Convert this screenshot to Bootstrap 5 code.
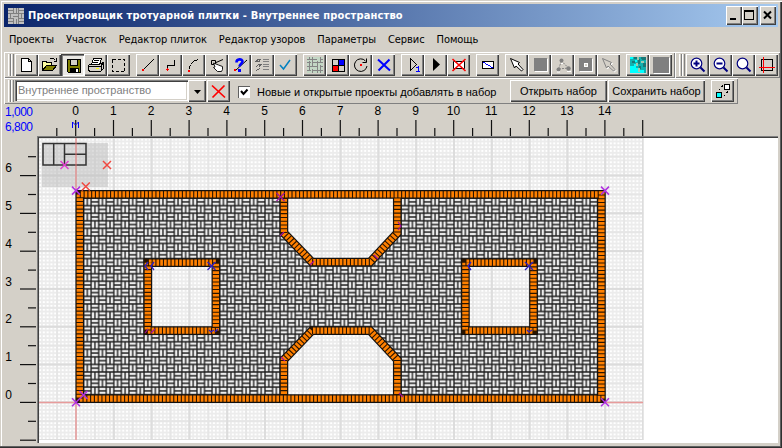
<!DOCTYPE html>
<html lang="ru">
<head>
<meta charset="utf-8">
<title>Проектировщик тротуарной плитки</title>
<link href="https://cdn.jsdelivr.net/npm/bootstrap@5.3.0/dist/css/bootstrap.min.css" rel="stylesheet">
<style>
html,body{height:448px;overflow:hidden}
body{background:#d4d0c8;color:#000;font-family:"Liberation Sans",Arial,sans-serif;font-size:11px;line-height:1}
svg{display:block;flex:none}
.app-window{width:782px;height:448px;background:#d4d0c8;padding:4px 4px 0;box-shadow:inset 1px 1px #d4d0c8,inset 2px 2px #fff,inset -1px -1px #303030,inset -2px -2px #606060}
.title-strip{height:23px;background:linear-gradient(90deg,#0a246a,#a6caf0);color:#fff;padding:0 2px 0 4px}
.title-text{font:bold 11px/24px "DejaVu Sans Condensed","DejaVu Sans",sans-serif;letter-spacing:.155px;white-space:nowrap;margin-left:4px}
.bev{background:#d4d0c8;border:0;padding:0;color:#000;box-shadow:inset 1px 1px #fff,inset -1px -1px #404040,inset -2px -2px #808080;flex:none}
.bev.down{background:#eae8e3;box-shadow:inset 1px 1px #404040,inset 2px 2px #808080,inset -1px -1px #fff}
.cap{width:16px;height:19px}
.menu-strip{height:25px;padding-left:5px;gap:12px;font:11px/26px "DejaVu Sans Condensed","DejaVu Sans",sans-serif;letter-spacing:-.07px}
.menu-strip a{color:#000;text-decoration:none;white-space:nowrap}
.toolstrip{height:26px;padding:2px 3px 0 4px;box-shadow:inset 1px 1px #fff,inset -1px -1px #808080}
.tool{width:23px;height:22px}
.grip{width:6px;height:22px;margin-right:1px;background:linear-gradient(90deg,#fff 0 1px,#d4d0c8 1px 2px,#808080 2px 3px,#fff 3px 4px,#d4d0c8 4px 5px,#808080 5px 6px)}
.gap-l{margin-left:6px}
.setstrip{width:734px;height:26px;padding:2px 3px 0 4px;box-shadow:inset 1px 1px #fff,inset -1px -1px #808080}
.combo{width:173px;height:21px;background:#fff;color:#808080;box-shadow:inset 1px 1px #808080,inset 2px 2px #404040,inset -1px -1px #fff,inset -2px -2px #d4d0c8;line-height:20px;padding-left:3px;white-space:nowrap}
.tickbox{width:12px;height:12px;background:#fff;box-shadow:inset 1px 1px #606060;margin-left:8px}
.set-label{margin-left:7px;width:253px;white-space:nowrap;line-height:24px}
.textbtn{width:97px;height:22px;line-height:23px;text-align:center;white-space:nowrap}
.plan{margin:0 -4px 0 -4px}
.plan text{font-family:"Liberation Sans",Arial,sans-serif;font-size:12px}
</style>
<script src="https://cdn.jsdelivr.net/npm/bootstrap@5.3.0/dist/js/bootstrap.bundle.min.js"></script>
</head>
<body>
<div class="app-window d-flex flex-column">
  <header class="title-strip d-flex align-items-center">
    <svg width="16" height="16" shape-rendering="crispEdges"><path fill="#c0c0c0" d="M0 0h16v16H0z"/><path stroke="#808080" d="M0 5.5h16M0 10.5h5M10 10.5h6M5.500 0v5M10.500 0v16M5.500 10v6M2.500 5v5M13.500 5v5M5 8.500h5M0 2.500h5M11 2.500h5M8.500 0v5M0 13.500h5M11 13.500h5M8.500 11v5"/></svg>
    <span class="title-text">Проектировщик тротуарной плитки - Внутреннее пространство</span>
    <div class="ms-auto d-flex">
      <button class="bev cap" aria-label="Свернуть"><svg width="16" height="19"><path d="M4 12h6v2H4z"/></svg></button>
      <button class="bev cap" aria-label="Развернуть"><svg width="16" height="19" shape-rendering="crispEdges"><path fill="none" stroke="#000" d="M2.500 4v9.500h9V4"/><path d="M2 4h10v2H2z"/></svg></button>
      <button class="bev cap" style="margin-left:2px" aria-label="Закрыть"><svg width="16" height="19"><path stroke="#000" stroke-width="2" d="M4 5.500l7 7M11 5.500l-7 7"/></svg></button>
    </div>
  </header>
  <nav class="menu-strip d-flex"><a>Проекты</a><a>Участок</a><a>Редактор плиток</a><a>Редактор узоров</a><a>Параметры</a><a>Сервис</a><a>Помощь</a></nav>

  <div class="d-flex">
  <div class="toolstrip d-flex">
    <i class="grip"></i>
    <button class="bev tool"><svg width="23" height="22" shape-rendering="crispEdges"><path fill="#fff" stroke="#000" d="M6.500 4.500h7l3 3v10h-10zM13.500 4.500v3h3"/></svg></button>
    <button class="bev tool"><svg width="23" height="22" shape-rendering="crispEdges"><path fill="#ffffa0" stroke="#000" d="M4.500 16.500v-9h4v1h5v3"/><path fill="#808000" stroke="#000" d="M4.500 16.500l4-5h10l-4 5z"/><path fill="none" stroke="#000" d="M11.500 5.500l1-1h3l2 2M18.500 4v3h-3"/></svg></button>
    <button class="bev tool down"><svg width="23" height="22" shape-rendering="crispEdges"><path fill="#808000" stroke="#000" d="M6.500 5.500h13v13h-12l-1-1z"/><path fill="#d4d0c8" stroke="#000" d="M9.500 5.500h7v6h-7z"/><path d="M9 14h9v5H9z"/><path fill="#fff" d="M15 15h2v3h-2z"/></svg></button>
    <button class="bev tool"><svg width="23" height="22" shape-rendering="crispEdges"><path fill="#d4d0c8" stroke="#000" d="M4.500 11.500l3-2h10l2-1v6l-3 3h-11l-1-2z"/><path fill="#fff" stroke="#000" d="M7.500 10.500l2-6h8l-2 6z"/><path stroke="#000" d="M10 6.500h5M9 8.500h5M5 12.500h12M17 12v5M17 12l2-3"/><path fill="#ff0" d="M12 14h3v1h-3z"/></svg></button>
    <button class="bev tool"><svg width="23" height="22" shape-rendering="crispEdges"><rect x="5.500" y="5.500" width="12" height="12" fill="none" stroke="#000" stroke-dasharray="3 2"/></svg></button>
    <button class="bev tool gap-l"><svg width="23" height="22" shape-rendering="crispEdges"><path stroke="#000" d="M7.500 15.500l10-10"/><path fill="red" d="M6 15h2v2H6z"/></svg></button>
    <button class="bev tool"><svg width="23" height="22" shape-rendering="crispEdges"><path fill="none" stroke="#000" d="M8.500 15v-3.500h7V6"/><path stroke="red" d="M7 15.500h3M8.500 14v3"/></svg></button>
    <button class="bev tool"><svg width="23" height="22" shape-rendering="crispEdges"><path fill="none" stroke="#000" d="M7.500 15c0-5 4-9 10-9.500" stroke-dasharray="4 1"/><path fill="red" d="M6 16h2v2H6z"/></svg></button>
    <button class="bev tool"><svg width="23" height="22"><path fill="none" stroke="#000" d="M6.500 6.500h4v4h-4zM11 8.500l7-3"/><path fill="#fff" stroke="#000" stroke-width=".9" d="M8.500 9l1.500 4-1.500.5 4 4h4l1-2v-3l-4-1.500z"/></svg></button>
    <button class="bev tool"><svg width="23" height="22"><path stroke="#000" d="M8 16L19 6"/><path fill="none" stroke="#00f" stroke-width="2.600" d="M8.500 8.500c0-4 6-4 6-1 0 2-3 2.500-3 5"/><path fill="#00f" d="M10 15h3v3h-3z"/><path fill="red" d="M6 15h2v2H6z"/></svg></button>
    <button class="bev tool"><svg width="23" height="22" shape-rendering="crispEdges"><path fill="none" stroke="#606060" d="M5 7.500l2-2h2l-1 2zM5 12.500l3-2h2l-2 2M5 16.500l4-2"/><path stroke="#808080" d="M12 5.500h6M12 7.500h6M12 10.500h6M12 12.500h6M12 15.500h6"/></svg></button>
    <button class="bev tool"><svg width="23" height="22"><path fill="none" stroke="#0080c0" stroke-width="1.500" d="M6 11l3.500 4L16 6"/></svg></button>
    <button class="bev tool gap-l"><svg width="23" height="22" shape-rendering="crispEdges"><path fill="#c3d7c5" d="M4 3h16v16H4z"/><path stroke="#848484" d="M4 5.500h10M17 5.500h3M4 8.500h4M10 8.500h10M4 12.500h10M17 12.500h3M4 16.500h4M10 16.500h10M6.500 3v2M6.500 7v9M9.500 3v10M9.500 15v4M14.500 7v12M17.500 3v6M17.500 11v8"/></svg></button>
    <button class="bev tool"><svg width="23" height="22" shape-rendering="crispEdges"><path fill="#d4d0c8" stroke="#000" d="M6.500 5.500h12v12h-12z"/><path fill="#00f" d="M13 6h5v6h-5z"/><path fill="red" d="M7 12h5v5H7z"/><path stroke="#000" d="M12.500 5v13M6 11.500h13"/></svg></button>
    <button class="bev tool"><svg width="23" height="22"><path fill="none" stroke="#000" d="M16.500 7A6.300 6.300 0 1 0 18 12M17.500 4.500v4h-4"/><path fill="red" d="M11 10h2v2h-2z"/></svg></button>
    <button class="bev tool"><svg width="23" height="22"><path stroke="#00f" stroke-width="2" d="M6 5.500l12 11M17.500 5.500l-11 11"/></svg></button>
    <button class="bev tool gap-l"><svg width="23" height="22" shape-rendering="crispEdges"><path fill="none" stroke="#000" d="M9.500 4.500v12l6-6z"/><path fill="none" stroke="#00f" d="M15 13.500h2.500M17.500 12v5M15 17.500h4"/></svg></button>
    <button class="bev tool"><svg width="23" height="22"><path d="M9 4v13l7-6.500z"/></svg></button>
    <button class="bev tool"><svg width="23" height="22"><path fill="#fff" stroke="#000" d="M6.500 7.500h11v7h-11z"/><path stroke="red" stroke-width="1.600" d="M5.500 5l13 12M18.500 5l-13 12"/></svg></button>
    <button class="bev tool gap-l"><svg width="23" height="22" shape-rendering="crispEdges"><path fill="#fff" stroke="#000" d="M6.500 7.500h11v7h-11z"/><path stroke="#00f" d="M7 8l10 6"/></svg></button>
    <button class="bev tool gap-l"><svg width="23" height="22"><path fill="#fff" stroke="#000" d="M5.500 4.500l9 4-1.500 1.500 5 5.500-1.500 1.500-5.500-5-1.500 2z"/></svg></button>
    <button class="bev tool"><svg width="23" height="22" shape-rendering="crispEdges"><path fill="#fff" d="M7 5h13v13H7z"/><path fill="#808080" d="M6 4h13v13H6z"/></svg></button>
    <button class="bev tool"><svg width="23" height="22"><g fill="#808080"><circle cx="10.500" cy="6.500" r="2"/><circle cx="7.500" cy="15.500" r="2"/><circle cx="17.500" cy="14.500" r="2.200"/></g><path stroke="#808080" stroke-dasharray="2 1" fill="none" d="M10.500 7l-3 8 10-1z"/><path stroke="#fff" fill="none" d="M6 18h3M16 17.500h4M10 9.500h2"/></svg></button>
    <button class="bev tool"><svg width="23" height="22" shape-rendering="crispEdges"><path fill="#fff" d="M6 5h13v13H6z"/><path fill="#808080" d="M5 4h13v13H5z"/><path fill="#fff" d="M10 9h4v4h-4z"/><path fill="#d4d0c8" d="M11 10h2v2h-2z"/></svg></button>
    <button class="bev tool"><svg width="23" height="22"><path fill="none" stroke="#fff" d="M6.500 5.500l9 4-1.500 1.500 5 5.500-1.500 1.500-5.500-5-1.500 2z"/><path fill="#d4d0c8" stroke="#808080" d="M5.500 4.500l9 4-1.500 1.500 5 5.500-1.500 1.500-5.500-5-1.500 2z"/></svg></button>
    <button class="bev tool gap-l"><svg width="23" height="22" shape-rendering="crispEdges"><path fill="#10b0b0" d="M4 3h16v16H4z"/><path fill="#0ff" d="M4 12h4v-2h2v4h4v2h4v3H4zM4 3h3v2H4zM9 6h2v2H9z"/><path fill="#187878" d="M8 3h3v2H8zM12 5h2v5h-2zM15 3h5v3h-4zM13 12h2v3h-2zM6 7h3v2H6zM17 9h3v4h-3z"/><path fill="#a0c8b0" d="M11 3h2v3h-2zM15 7h3v2h-3zM10 9h2v3h-2zM12 14h2v4h-2z"/></svg></button>
    <button class="bev tool"><svg width="23" height="22" shape-rendering="crispEdges"><path fill="#fff" d="M5 4h16v16H5z"/><path fill="#808080" d="M4 3h16v16H4z"/></svg></button>
  </div>
  <div class="toolstrip d-flex flex-grow-1" style="padding-right:2px">
    <i class="grip"></i>
    <button class="bev tool"><svg width="23" height="22"><g stroke="#000080" fill="#fff"><circle cx="10.500" cy="9.500" r="5.300" stroke-width="1.200"/><path stroke-width="2" d="M14.500 13.500l4 4M7.500 9.500h6M10.500 6.500v6"/></g></svg></button>
    <button class="bev tool"><svg width="23" height="22"><g stroke="#000080" fill="#fff"><circle cx="10.500" cy="9.500" r="5.300" stroke-width="1.200"/><path stroke-width="2" d="M14.500 13.500l4 4M7.500 9.500h6"/></g></svg></button>
    <button class="bev tool"><svg width="23" height="22"><g stroke="#000080" fill="#fff"><circle cx="10.500" cy="9.500" r="5.300" stroke-width="1.200"/><path stroke-width="2" d="M14.500 13.500l4 4"/></g></svg></button>
    <button class="bev tool"><svg width="23" height="22" shape-rendering="crispEdges"><path fill="none" stroke="#000" d="M6.500 5.500h11v11h-11z"/><path stroke="red" d="M8.500 3v16M4 13.500h16"/></svg></button>
  </div>
  </div>

  <div class="setstrip d-flex">
    <i class="grip"></i>
    <div class="combo">Внутреннее пространство</div>
    <button class="bev" style="width:18px;height:22px"><svg width="18" height="22"><path d="M6 10h7l-3.500 4z"/></svg></button>
    <button class="bev" style="width:23px;height:22px;margin-left:1px"><svg width="23" height="22"><path stroke="red" stroke-width="1.700" d="M5 5.500l13 12M17.500 5.500l-12 12"/></svg></button>
    <span class="tickbox align-self-center"><svg width="12" height="12"><path fill="none" stroke="#000" stroke-width="2" d="M3 5l2.500 3L9.500 3.500"/></svg></span>
    <label class="set-label">Новые и открытые проекты добавлять в набор</label>
    <button class="bev textbtn">Открыть набор</button>
    <button class="bev textbtn" style="margin-left:1px">Сохранить набор</button>
    <button class="bev tool gap-l"><svg width="23" height="22" shape-rendering="crispEdges"><path fill="#fff" stroke="#000" d="M13.500 4.500h5v5h-5z"/><path fill="#0ff" stroke="#000" d="M5.500 12.500h5v5h-5z"/><path fill="none" stroke="#000" stroke-dasharray="2 2" d="M12 5.500l-5 6M17 11.500l-5 6"/></svg></button>
  </div>

  <svg class="plan" width="782" height="344" viewBox="0 104 782 344">
    <defs>
      <pattern id="fine" x="76" y="402.300" width="3.780" height="3.780" patternUnits="userSpaceOnUse"><path stroke="#ececec" stroke-width="1.700" d="M0 0H3.780M0 0V3.780M3.780 0V3.780M0 3.780H3.780"/></pattern>
      <pattern id="half" x="76" y="402.300" width="18.900" height="18.900" patternUnits="userSpaceOnUse"><path stroke="#e6e6e6" stroke-width="1.800" d="M0 0H18.900M0 0V18.900M18.900 0V18.900M0 18.900H18.900"/></pattern>
      <pattern id="whole" x="76" y="402.300" width="37.800" height="37.800" patternUnits="userSpaceOnUse"><path stroke="#dcdcdc" stroke-width="1.800" d="M0 0H37.800M0 0V37.800M37.800 0V37.800M0 37.800H37.800"/></pattern>
      <pattern id="weave" x="83.560" y="198.100" width="15.120" height="15.120" patternUnits="userSpaceOnUse"><path fill="#ededed" d="M0 0h15.120v15.120H0z"/><path fill="none" stroke="#1c1c1c" stroke-width="1.300" d="M0 0H15.120M0 7.560H15.120M0 15.120H15.120M0 0V15.120M7.560 0V15.120M15.120 0V15.120M3.780 0V7.560M7.560 3.780H15.120M0 11.340H7.560M11.340 7.560V15.120"/></pattern>
      <path id="kerb" d="M79.780 194.400H601.400V398.600H79.780ZM147.800 262.600H215.900V330.600H147.800ZM465.400 262.600H533.500V330.600H465.400ZM283.900 198V233L312 262.200H370L397.300 233V198M283.900 395V359.800L312 330.600H370L397.300 359.800V395"/>
      <path id="cross" d="M-4-4L4 4M4-4L-4 4"/>
    </defs>
    <path fill="#fff" d="M38 138H778V443H38z"/>
    <path fill="url(#fine)" d="M39 138H643.500V440H39z"/>
    <path fill="url(#half)" d="M39 138H643.500V440H39z"/>
    <path fill="url(#whole)" d="M39 138H643.500V440H39z"/>
    <path stroke="#808080" d="M37 136.500H778M37.500 136V443"/><path stroke="#404040" d="M38 137.500H778M38.500 138V443"/>
    <path fill="#bbb" fill-opacity=".5" d="M42 143H108V187H42z"/>
    <path fill="none" stroke="#333" stroke-width="1.500" d="M43 143.500H86V165H43zM53.700 143.500V165M64.500 143.500V165M64.500 154.300H86"/>
    <path stroke="#f07070" stroke-opacity=".6" stroke-width="1.500" d="M76 138V190M76 402V440M39 402.400H76M605 402.400H643"/>
    <path fill="url(#weave)" fill-rule="evenodd" d="M80 194H601V399H80ZM147.800 262.600V330.600H215.900V262.600ZM465.400 262.600V330.600H533.500V262.600ZM283.900 194V233L312 262.200H370L397.300 233V194ZM283.900 399V359.800L312 330.600H370L397.300 359.800V399Z"/>
    <use href="#kerb" fill="none" stroke="#111" stroke-width="8.700"/>
    <use href="#kerb" fill="none" stroke="#ff8000" stroke-width="6.300"/>
    <use href="#kerb" fill="none" stroke="#2a1400" stroke-width="7.500" stroke-dasharray="1.100 2.680"/>
    <g fill="none" stroke="#b030e0" stroke-width="1.500">
      <use href="#cross" x="76" y="190.600"/><use href="#cross" x="605" y="190.600"/><use href="#cross" x="76" y="402.300"/><use href="#cross" x="605" y="402.300"/><use href="#cross" x="83.500" y="395"/><use href="#cross" x="64.500" y="165" stroke="#e040d0"/>
      <g stroke="#a010a0" stroke-width="1.200"><use href="#cross" x="280.500" y="197"/><path d="M280 236l4-4M310 265l4-4M374 255l4 4M398 222l3 4-3 4M145 333l3-4M151 333l4-4M281 357l4 4M399 393l4 4"/></g>
      <g stroke="#f04840"><use href="#cross" x="107" y="165"/><use href="#cross" x="85.800" y="186.500"/></g>
      <g stroke="#3020c0" stroke-width="1.300"><use href="#cross" x="211.500" y="266"/><use href="#cross" x="529" y="266"/><path d="M148 262l-3 4 3 4M154 262l-3 4 3 4M471 262l-3 4 3 4M209 330l2 2 3-2M215 332l3-3M527 330l2 2 3-2"/></g>
    </g>
    <g id="ruler" text-anchor="middle"></g>
    <g fill="#00f"><text x="5" y="116" textLength="28">1,000</text><text x="5" y="131" textLength="28">6,800</text><path fill="none" stroke="#00f" d="M72.500 128v-6l3 3 3-3v6"/></g>
    <path fill="#d4d0c8" d="M778 136h2v310h-2z"/>
    <path fill="#606060" d="M780 104h1v343h-1zM0 446h781v1H0z"/><path fill="#303030" d="M781 104h1v344h-1zM0 447h782v1H0z"/>
    <path stroke="#fff" d="M1.500 104V446"/>
  </svg>
</div>
<script>
const step = 37.8;
let marks = '';
for (let k = -0.5; k <= 15; k += 0.5) {
  const x = 76 + k * step, whole = Number.isInteger(k);
  marks += `<path stroke="#111" stroke-width="1.2" d="M${x - .3} ${whole ? 120 : 128}V136"/>`;
  if (whole && k < 15) marks += `<text x="${x - .5}" y="115">${k}</text>`;
}
for (let k = -1; k <= 6.5; k += 0.5) {
  const y = 402.4 - k * step, whole = Number.isInteger(k);
  marks += `<path stroke="#111" stroke-width="1.2" d="M${whole ? 20 : 28} ${y}H36"/>`;
  if (whole && k >= 0) marks += `<text x="8.500" y="${y - 3.5}">${k}</text>`;
}
document.getElementById('ruler').innerHTML = marks;
</script>
</body>
</html>
